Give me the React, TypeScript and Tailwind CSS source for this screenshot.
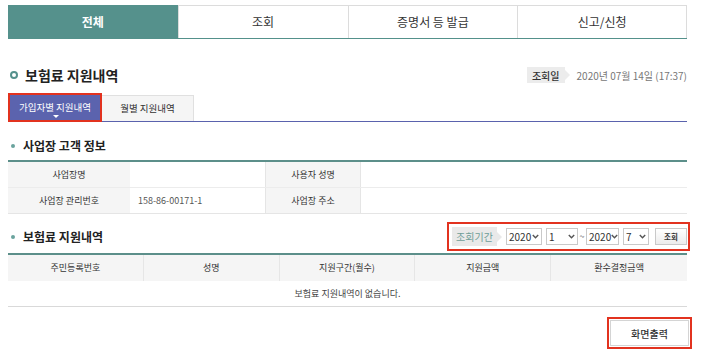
const FONT = "font-['Noto_Sans_CJK_KR','Noto_Sans',sans-serif]";

function Chevron() {
  return (
    <svg width="7" height="5" viewBox="0 0 7 5" className="ml-auto shrink-0">
      <path d="M0.8 1 L3.5 3.8 L6.2 1" fill="none" stroke="#555" strokeWidth="1.4" />
    </svg>
  );
}

function SelectBox({ value, w }: { value: string; w: string }) {
  return (
    <div className={`${w} h-[17px] shrink-0 border border-[#c9c9c9] bg-white flex items-center pl-[2px] pr-[2px] text-[10px] text-[#333] leading-none`}>
      <span>{value}</span>
      <Chevron />
    </div>
  );
}

function TopTabs() {
  const tabs = ["전체", "조회", "증명서 등 발급", "신고/신청"];
  return (
    <div className="grid grid-cols-4 h-[34px] border-b border-[#54918b]">
      {tabs.map((t, i) => (
        <div
          key={t}
          className={
            i === 0
              ? "bg-[#55918c] text-white font-bold flex items-center justify-center text-[12px]"
              : "bg-white text-[#333] border-t border-l border-[#dcdcdc] last:border-r flex items-center justify-center text-[12px]"
          }
        >
          {t}
        </div>
      ))}
    </div>
  );
}

function SectionTitle({ children }: { children: React.ReactNode }) {
  return (
    <div className="flex items-center gap-[8px] pl-[3px]">
      <span className="w-[4px] h-[4px] rounded-full bg-[#6aa39d]" />
      <span className="text-[12px] font-bold text-[#222]">{children}</span>
    </div>
  );
}

export default function App() {
  return (
    <div className={`${FONT} w-[701px] h-[356px] bg-white pt-[5px] px-[8px] overflow-hidden`}>
      <div className="w-[679px]">
        <TopTabs />

        {/* page title */}
        <div className="mt-[24px] h-[24px] flex items-center justify-between">
          <div className="flex items-center gap-[7px] pl-[2px]">
            <span className="w-[8px] h-[8px] rounded-full border-2 border-[#55918c]" />
            <span className="text-[14px] font-bold text-[#222]">보험료 지원내역</span>
          </div>
          <div className="flex items-center">
            <div className="relative bg-[#ececec] h-[16px] px-[5px] flex items-center text-[10px] font-medium text-[#333]">
              조회일
              <span className="absolute right-[-5px] top-[3px] w-0 h-0 border-y-[5px] border-y-transparent border-l-[5px] border-l-[#ececec]" />
            </div>
            <span className="ml-[12px] text-[10px] text-[#777]">2020년 07월 14일 (17:37)</span>
          </div>
        </div>

        {/* sub tabs */}
        <div className="mt-[7px] h-[28px] flex items-end border-b border-[#5a62ad]">
          <div className="relative w-[94px] h-[29px] -mb-[1px] border-2 border-[#e2321f] bg-[#5b63ae] text-white text-[9.5px] flex items-center justify-center">
            가입자별 지원내역
            <span className="absolute bottom-[2px] left-[43px] w-0 h-0 border-x-[3px] border-x-transparent border-t-[3px] border-t-white" />
          </div>
          <div className="w-[92px] h-[26px] bg-[#f5f5f5] border-t border-r border-[#e0e0e0] text-[#333] text-[9.5px] flex items-center justify-center">
            월별 지원내역
          </div>
        </div>

        {/* customer info */}
        <div className="mt-[15px]">
          <SectionTitle>사업장 고객 정보</SectionTitle>
        </div>
        <div className="mt-[5px] border-t-2 border-[#5c8f8a] text-[9px] text-[#333]">
          <div className="grid grid-cols-[122px_136px_95px_1fr] h-[26px] border-b border-[#ececec]">
            <div className="bg-[#f5f5f5] flex items-center justify-center">사업장명</div>
            <div className="bg-white border-r border-[#e5e5e5]" />
            <div className="bg-[#f5f5f5] border-r border-[#e5e5e5] flex items-center justify-center">사용자 성명</div>
            <div className="bg-white" />
          </div>
          <div className="grid grid-cols-[122px_136px_95px_1fr] h-[26px] border-b border-[#e5e5e5]">
            <div className="bg-[#f5f5f5] flex items-center justify-center">사업장 관리번호</div>
            <div className="bg-white border-r border-[#e5e5e5] flex items-center pl-[8px] text-[#555]">158-86-00171-1</div>
            <div className="bg-[#f5f5f5] border-r border-[#e5e5e5] flex items-center justify-center">사업장 주소</div>
            <div className="bg-white" />
          </div>
        </div>

        {/* support history */}
        <div className="mt-[8px] h-[29px] flex items-center justify-between">
          <SectionTitle>보험료 지원내역</SectionTitle>
          <div className="-mr-[3px] w-[243px] h-[29px] border-2 border-[#e2321f] flex items-center pl-[3px]">
            <div className="relative bg-[#e9e9e9] h-[19px] w-[45px] shrink-0 flex items-center justify-center text-[10px] text-[#6f9d98]">
              조회기간
              <span className="absolute right-[-5px] top-[5px] w-0 h-0 border-y-[5px] border-y-transparent border-l-[5px] border-l-[#e9e9e9]" />
            </div>
            <div className="ml-[9px] flex items-center">
              <SelectBox value="2020" w="w-[36px]" />
              <div className="ml-[4px]">
                <SelectBox value="1" w="w-[32px]" />
              </div>
              <span className="w-[8px] shrink-0 text-center text-[9px] text-[#555]">~</span>
              <SelectBox value="2020" w="w-[33px]" />
              <div className="ml-[4px]">
                <SelectBox value="7" w="w-[26px]" />
              </div>
            </div>
            <div className="ml-[6px] w-[32px] h-[17px] shrink-0 border border-[#c9c9c9] bg-gradient-to-b from-white to-[#ececec] text-[7.5px] font-bold text-[#333] flex items-center justify-center">
              조회
            </div>
          </div>
        </div>
        <div className="mt-[2px] border-t-2 border-[#5c8f8a] text-[9px] text-[#333]">
          <div className="grid grid-cols-5 h-[26px] bg-[#f5f5f5]">
            {["주민등록번호", "성명", "지원구간(월수)", "지원금액", "환수결정금액"].map((h, i) => (
              <div key={h} className={`flex items-center justify-center ${i < 4 ? "border-r border-[#e6e6e6]" : ""}`}>
                {h}
              </div>
            ))}
          </div>
          <div className="h-[26px] border-b border-[#d9d9d9] flex items-center justify-center text-[#444]">
            보험료 지원내역이 없습니다.
          </div>
        </div>

        {/* print */}
        <div className="mt-[10px] flex justify-end -mr-[5px]">
          <div className="w-[85px] h-[32px] border-2 border-[#e2321f] p-[1px]">
            <div className="w-full h-full border border-[#d4d4d4] bg-white flex items-center justify-center text-[10px] font-medium text-[#333]">
              화면출력
            </div>
          </div>
        </div>
      </div>
    </div>
  );
}
